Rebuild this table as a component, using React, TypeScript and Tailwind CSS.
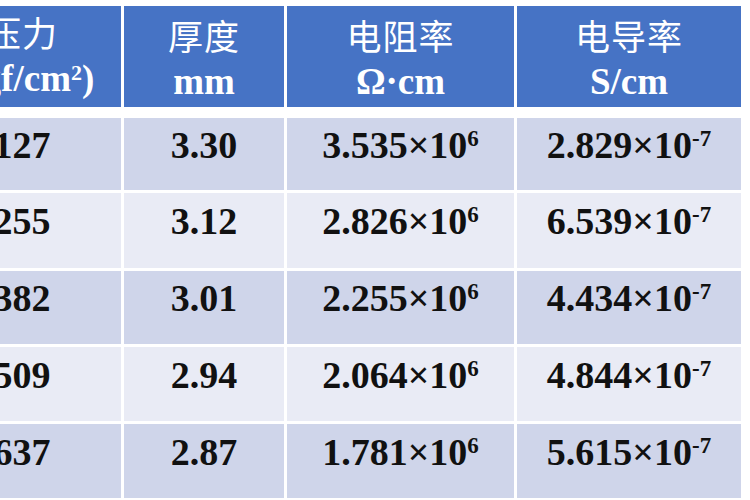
const rows = [
  { p: "127", t: "3.30", r: "3.535", s: "2.829" },
  { p: "255", t: "3.12", r: "2.826", s: "6.539" },
  { p: "382", t: "3.01", r: "2.255", s: "4.434" },
  { p: "509", t: "2.94", r: "2.064", s: "4.844" },
  { p: "637", t: "2.87", r: "1.781", s: "5.615" },
];

const serif = "font-['Liberation_Serif','Noto_Sans_CJK_SC',serif]";

const Pow = ({ base, exp }: { base: string; exp: string }) => (
  <span>
    {base}×10
    <span className="relative -top-[12px] text-[23px]">{exp}</span>
  </span>
);

const Head = ({ zh, unit }: { zh: string; unit: React.ReactNode }) => (
  <div className="flex flex-col items-center justify-center bg-[#4673c5] pt-[6px] text-white leading-[43px] mb-[8px]">
    <span className="text-[35px] font-normal tracking-[1px]">{zh}</span>
    <span className="text-[37px] font-bold">{unit}</span>
  </div>
);

export default function App() {
  return (
    <div className={`w-[750px] h-[500px] overflow-hidden bg-white ${serif}`}>
      <div className="-ml-[77px] mt-[6px] grid grid-cols-[198px_160px_227px_224px] grid-rows-[109px_72px_75px_73px_74px_74px] gap-x-[3px] gap-y-[3px]">
        <Head
          zh="压力"
          unit={
            <span>
              (kgf/cm<span className="relative -top-[11px] text-[22px]">2</span>)
            </span>
          }
        />
        <Head zh="厚度" unit="mm" />
        <Head zh="电阻率" unit="Ω·cm" />
        <Head zh="电导率" unit="S/cm" />

        {rows.map((row, i) => {
          const bg = i % 2 === 0 ? "bg-[#cfd5ea]" : "bg-[#e9ebf5]";
          const cell = `flex items-center justify-center pb-[18px] text-[38px] font-bold text-[#111] ${bg}`;
          return [
            <div key={`p${i}`} className={cell}>{row.p}</div>,
            <div key={`t${i}`} className={cell}>{row.t}</div>,
            <div key={`r${i}`} className={cell}><Pow base={row.r} exp="6" /></div>,
            <div key={`s${i}`} className={cell}><Pow base={row.s} exp="-7" /></div>,
          ];
        })}
      </div>
    </div>
  );
}
